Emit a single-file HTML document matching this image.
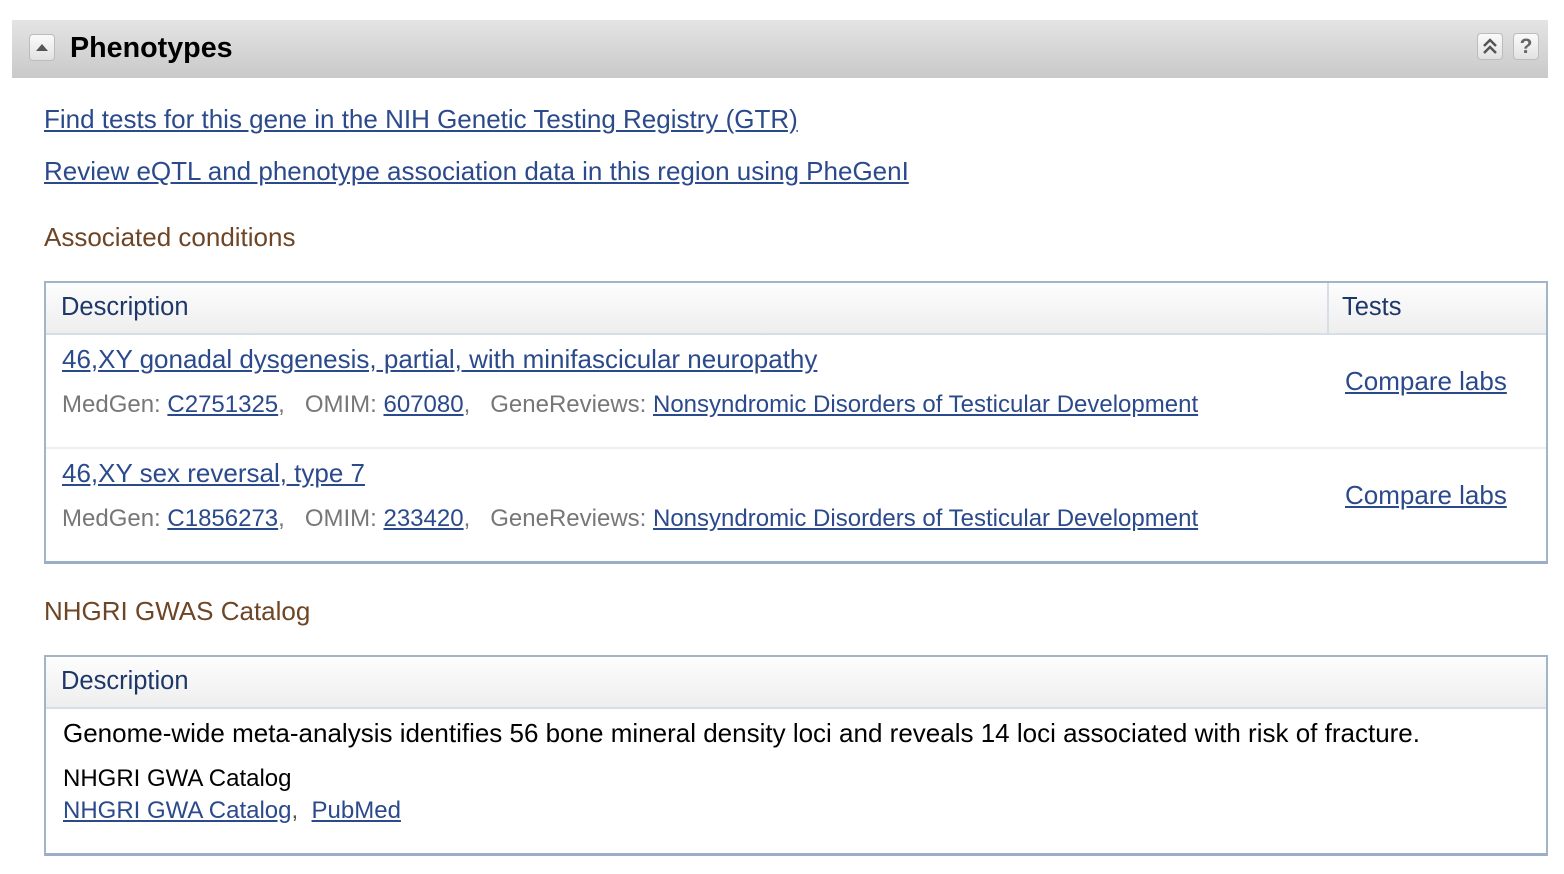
<!DOCTYPE html>
<html><head><meta charset="utf-8"><style>
*{margin:0;padding:0;box-sizing:border-box}
body{width:1564px;height:874px;background:#fff;font-family:"Liberation Sans",Arial,sans-serif;position:relative;overflow:hidden}
a{color:#2b4a8c;text-decoration:underline}
.abs{position:absolute;white-space:nowrap}
.hdr{position:absolute;left:12px;top:20px;width:1536px;height:58px;background:linear-gradient(#e4e4e4,#c9c9c9)}
.btn{position:absolute;width:26px;height:27px;border:1px solid #bcbcbc;border-radius:4px;background:linear-gradient(#fafafa,#e2e2e2)}
.tbl{position:absolute;left:44px;width:1504px;border:2px solid #a3b3c8;border-bottom:3px solid #9aaec6}
.th{position:absolute;left:0;right:0;top:0;height:52px;background:linear-gradient(#fdfdfd,#eeeeee);border-bottom:2px solid #d6dee8}
.thtxt{position:absolute;top:10px;font-size:25.5px;color:#1e3769}
.brown{color:#6e4525;font-size:26px}
.meta{font-size:24px;color:#777}
.big{font-size:26px}
</style></head><body>
<div class="hdr">
  <div class="btn" style="left:17px;top:14px"><div style="position:absolute;left:6px;top:9px;width:0;height:0;border-left:6px solid transparent;border-right:6px solid transparent;border-bottom:7px solid #555"></div></div>
  <div class="abs" style="left:58px;top:12px;font-size:28.7px;font-weight:bold;color:#000">Phenotypes</div>
  <div class="btn" style="left:1465px;top:13px"><svg width="24" height="25" viewBox="0 0 24 25"><path d="M6 12 L12 6 L18 12 M6 19 L12 13 L18 19" fill="none" stroke="#555" stroke-width="2.5"/></svg></div>
  <div class="btn" style="left:1501px;top:13px;text-align:center;font-weight:bold;font-size:21px;color:#666;line-height:25px">?</div>
</div>
<a class="abs big" style="left:44px;top:104px" href="#">Find tests for this gene in the NIH Genetic Testing Registry (GTR)</a>
<a class="abs big" style="left:44px;top:156px" href="#">Review eQTL and phenotype association data in this region using PheGenI</a>
<div class="abs brown" style="left:44px;top:222px">Associated conditions</div>

<div class="tbl" style="top:281px;height:283px">
  <div class="th"><div style="position:absolute;left:1281px;top:0;bottom:0;border-left:2px solid #d6dee8"></div></div>
  <div class="thtxt" style="left:15px">Description</div>
  <div class="thtxt" style="left:1296px">Tests</div>
  <a class="abs big" style="left:16px;top:61px" href="#">46,XY gonadal dysgenesis, partial, with minifascicular neuropathy</a>
  <div class="abs meta" style="left:16px;top:108px">MedGen: <a href="#">C2751325</a>,&nbsp;&nbsp; OMIM: <a href="#">607080</a>,&nbsp;&nbsp; GeneReviews: <a href="#">Nonsyndromic Disorders of Testicular Development</a></div>
  <a class="abs big" style="left:1299px;top:83px" href="#">Compare labs</a>
  <div style="position:absolute;left:0;right:0;top:164px;border-top:2px solid #eeeeee"></div>
  <a class="abs big" style="left:16px;top:175px" href="#">46,XY sex reversal, type 7</a>
  <div class="abs meta" style="left:16px;top:222px">MedGen: <a href="#">C1856273</a>,&nbsp;&nbsp; OMIM: <a href="#">233420</a>,&nbsp;&nbsp; GeneReviews: <a href="#">Nonsyndromic Disorders of Testicular Development</a></div>
  <a class="abs big" style="left:1299px;top:197px" href="#">Compare labs</a>
</div>

<div class="abs brown" style="left:44px;top:596px">NHGRI GWAS Catalog</div>
<div class="tbl" style="top:655px;height:201px">
  <div class="th"></div>
  <div class="thtxt" style="left:15px">Description</div>
  <div class="abs big" style="left:17px;top:61px;color:#000">Genome-wide meta-analysis identifies 56 bone mineral density loci and reveals 14 loci associated with risk of fracture.</div>
  <div class="abs" style="left:17px;top:108px;color:#000;font-size:24px">NHGRI GWA Catalog</div>
  <div class="abs" style="left:17px;top:140px;font-size:24px;color:#555"><a href="#">NHGRI GWA Catalog</a>,&nbsp; <a href="#">PubMed</a></div>
</div>
</body></html>
